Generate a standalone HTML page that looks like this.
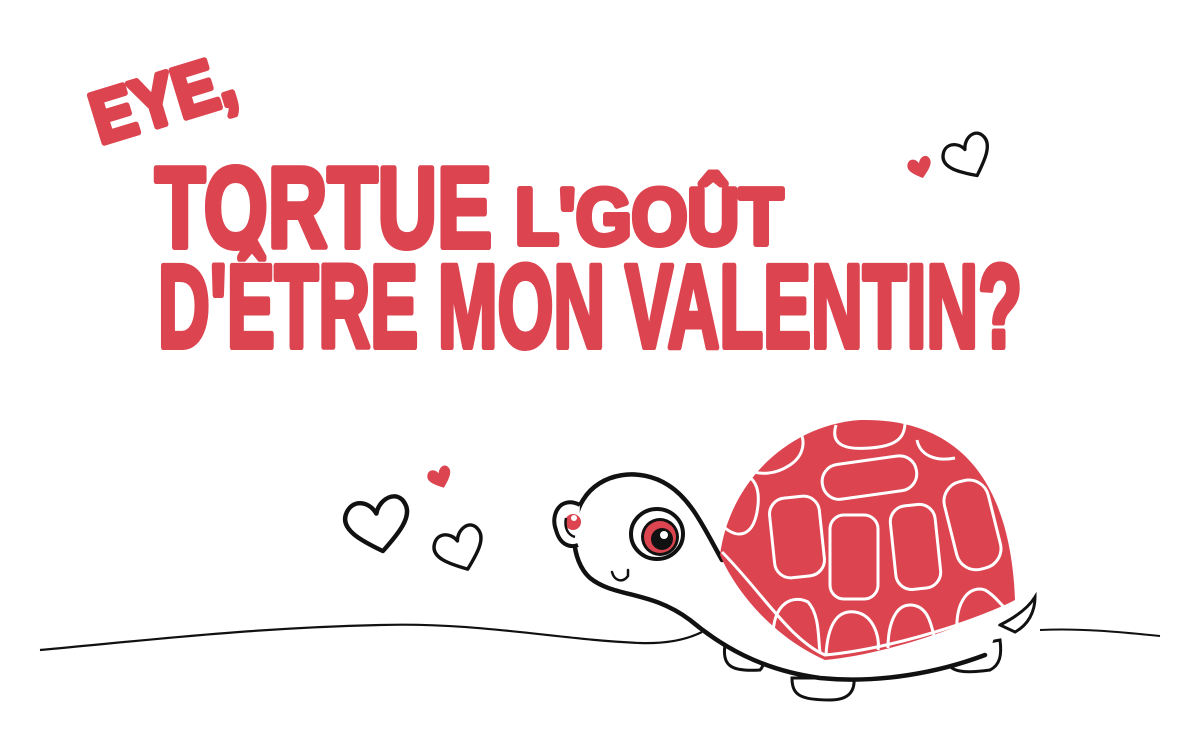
<!DOCTYPE html>
<html><head><meta charset="utf-8"><style>
html,body{margin:0;padding:0;background:#fff;width:1200px;height:750px;overflow:hidden}
svg{display:block}
text{font-family:"Liberation Sans",sans-serif;font-weight:bold;fill:#dc4450;stroke:#dc4450;stroke-width:6;stroke-linejoin:round}
</style></head><body>
<svg width="1200" height="750" viewBox="0 0 1200 750" xmlns="http://www.w3.org/2000/svg">
<defs>
<path id="h" d="M0,30 C-20,15 -38,0 -30,-15 C-22,-30 -5,-25 0,-10 C5,-25 25,-32 30,-15 C35,0 18,15 0,30 Z"/>
</defs>
<!-- Title -->
<text x="0" y="0" font-size="72" textLength="146" lengthAdjust="spacingAndGlyphs" transform="translate(100,144) rotate(-17)">EYE,</text>
<text x="155" y="247" font-size="114" textLength="337" lengthAdjust="spacingAndGlyphs">TORTUE</text>
<text x="515" y="244" font-size="80" textLength="268" lengthAdjust="spacingAndGlyphs">L'GOÛT</text>
<text x="158" y="347" font-size="118" textLength="864" lengthAdjust="spacingAndGlyphs">D'ÊTRE MON VALENTIN?</text>

<!-- hearts -->
<g fill="none" stroke="#111" stroke-width="4.5" stroke-linejoin="round">
<use href="#h" transform="translate(378,523) rotate(-10) scale(1.0,0.95)"/>
<use href="#h" transform="translate(460,548) rotate(-20) scale(0.78,0.75)"/>
<use href="#h" transform="translate(968,156) rotate(-25) scale(0.75,0.72)"/>
</g>
<g fill="#dc4450">
<use href="#h" transform="translate(440,477) rotate(-20) scale(0.38)"/>
<use href="#h" transform="translate(920,167) rotate(-15) scale(0.38)"/>
</g>

<!-- ground -->
<path d="M40,650 C150,640 250,628 380,625 C480,622 560,640 640,643 C670,644 690,638 702,632" fill="none" stroke="#111" stroke-width="2.2"/>
<path d="M1040,630 C1080,628 1120,632 1160,636" fill="none" stroke="#111" stroke-width="2"/>

<!-- feet -->
<g fill="#fff" stroke="#111" stroke-width="3">
<path d="M725,645 C722,665 730,672 760,670 C765,665 765,655 760,648 Z"/>
<path d="M792,678 C792,695 800,700 830,700 C850,700 855,690 854,678 Z"/>
<path d="M945,650 C945,670 955,675 990,670 C1000,665 1002,655 1000,640 Z"/>
<path d="M900,662 C905,670 920,672 935,665 Z"/>
</g>
<!-- tail -->
<path d="M1000,625 C1020,615 1030,605 1035,597 C1035,612 1028,625 1015,632 Z" fill="#fff" stroke="#111" stroke-width="3"/>

<!-- body / neck -->
<path d="M722,560 C700,530 690,500 668,485 C640,467 600,472 583,500 C570,520 570,560 590,578 C615,598 650,590 690,620 C720,645 760,670 820,678 C880,684 940,672 990,650 L1000,620 L740,600 Z" fill="#fff"/>
<path d="M722,560 C705,530 692,500 668,485 C640,467 600,472 583,500 C570,520 570,560 590,578 C615,598 650,590 690,620 C720,645 760,670 820,678 C880,684 940,672 985,655" fill="none" stroke="#111" stroke-width="4.5" stroke-linecap="round"/>
<!-- back eye bump -->
<path d="M580,505 C560,495 550,515 556,530 C560,545 570,548 578,545" fill="#fff" stroke="#111" stroke-width="4"/>
<circle cx="573" cy="522" r="8" fill="#dc4450"/>
<path d="M566,518 C564,528 568,535 575,537" fill="none" stroke="#111" stroke-width="2.5"/>
<circle cx="574" cy="518" r="3" fill="#fff"/>
<!-- eye -->
<ellipse cx="657" cy="534" rx="26" ry="25" fill="#fff" stroke="#111" stroke-width="4"/>
<circle cx="660" cy="537" r="19" fill="#111"/>
<circle cx="660" cy="537" r="16" fill="#dc4450"/>
<circle cx="662" cy="539" r="11" fill="#111"/>
<circle cx="664" cy="535" r="4" fill="#fff"/>
<!-- smile -->
<path d="M612,572 C614,580 622,584 628,576 L628,570" fill="none" stroke="#111" stroke-width="2.5" stroke-linecap="round"/>

<!-- shell -->
<path d="M720,555 C730,480 790,425 860,420 C950,418 1010,470 1015,600 C960,630 880,655 825,660 C780,640 740,600 720,555 Z" fill="#dc4450"/>
<g fill="none" stroke="#fff" stroke-width="3">
<path d="M722,552 C760,590 790,640 825,655 C880,650 960,628 1015,602"/>
<rect x="822" y="460" width="95" height="35" rx="17" transform="rotate(-8 870 478)"/>
<path d="M836,425 C830,445 845,450 870,448 C900,446 905,435 905,422"/>
<path d="M748,470 C760,475 775,475 790,465 C805,455 805,440 800,432"/>
<path d="M917,440 C920,455 935,462 955,458"/>
<path d="M725,528 C740,540 755,535 758,505 C760,485 752,478 747,476"/>
<rect x="772" y="497" width="50" height="80" rx="16" transform="rotate(-6 797 537)"/>
<rect x="830" y="515" width="48" height="84" rx="14"/>
<rect x="893" y="505" width="45" height="84" rx="16" transform="rotate(-6 915 547)"/>
<rect x="950" y="480" width="45" height="90" rx="20" transform="rotate(-14 972 525)"/>
<path d="M773,640 C772,600 795,595 808,602 C820,615 818,640 820,652"/>
<path d="M826,655 C828,620 840,610 855,612 C875,615 880,640 878,650"/>
<path d="M888,648 C888,625 895,605 910,605 C930,605 932,630 935,640"/>
<path d="M957,633 C955,600 970,585 985,590 C1000,598 1005,615 1010,605"/>
</g>
</svg>
</body></html>
